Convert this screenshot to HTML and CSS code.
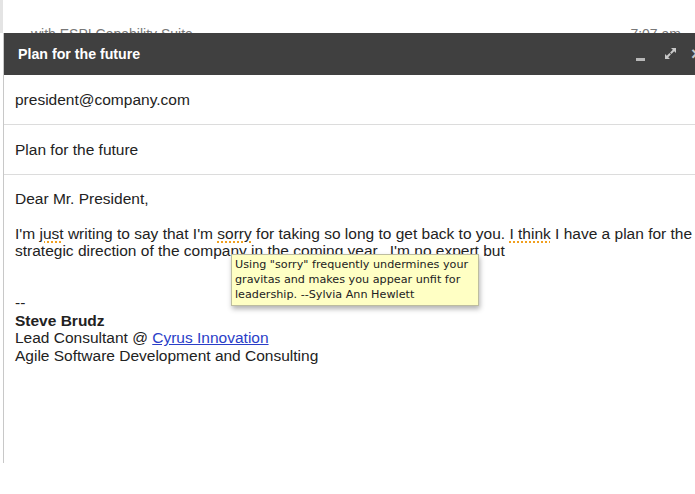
FILE: index.html
```html
<!DOCTYPE html>
<html lang="en">
<head>
    <meta charset="UTF-8">
    <title>Plan for the future</title>
    <link rel="stylesheet" href="styles.css">
</head>
<body>
    <div class="behind">
        <span class="behind-subject">with ESPI Capability Suite</span>
        <span class="behind-time">7:07 am</span>
    </div>
    <div class="compose">
        <div class="compose-head">
            <div class="compose-title">Plan for the future</div>
            <div class="compose-tools">
                <span class="tool-min"></span>
                <svg class="tool-expand" width="13" height="13" viewBox="0 0 13 13">
                    <path d="M7 1h5v5l-1.8-1.8-2.7 2.7-1.4-1.4 2.7-2.7z M6 12h-5v-5l1.8 1.8 2.7-2.7 1.4 1.4-2.7 2.7z" fill="#c8c8c8"/>
                </svg>
                <span class="tool-close">×</span>
            </div>
        </div>
        <div class="field">president@company.com</div>
        <div class="field">Plan for the future</div>
        <div class="body">
            <div>Dear Mr. President,</div>
            <br>
            <div>I'm <span class="flag">just</span> writing to say that I'm <span class="flag">sorry</span> for taking so long to get back to you. <span class="flag">I think</span> I have a plan for the strategic direction of the company in the coming year.&nbsp; I'm no <span class="flag">expert</span> but</div>
            <br>
            <br>
            <div>--</div>
            <div class="sig-name">Steve Brudz</div>
            <div>Lead Consultant @ <a href="#">Cyrus Innovation</a></div>
            <div>Agile Software Development and Consulting</div>
            <div class="tip">Using "sorry" frequently undermines your gravitas and makes you appear unfit for leadership. --Sylvia Ann Hewlett</div>
        </div>
    </div>
</body>
</html>
```

FILE: styles.css
```css
body {
    margin: 0;
    padding: 0;
    background: #fff;
    font-family: "Liberation Sans", Arial, sans-serif;
    color: #222;
    overflow: hidden;
}
.behind {
    height: 33px;
    overflow: hidden;
    display: flex;
    justify-content: space-between;
    box-sizing: border-box;
    padding: 26px 14px 0 28px;
    color: #777;
    font-size: 14px;
    line-height: 17px;
    border-left: 3px solid #e4e4e4;
}
.compose {
    margin-left: 3px;
    width: 720px;
    height: 430px;
    border-left: 1px solid #c8c8c8;
    background: #fff;
}
.compose-head {
    height: 42px;
    background: #404040;
    display: flex;
    align-items: center;
    justify-content: space-between;
    padding: 0 0 0 14px;
}
.compose-title {
    color: #fff;
    font-weight: bold;
    font-size: 14.2px;
}
.compose-tools {
    display: flex;
    align-items: center;
    width: 92px;
    margin-right: -4px;
}
.tool-min {
    width: 9px;
    height: 3px;
    background: #b8b8b8;
    margin-top: 10px;
}
.tool-expand {
    margin-left: 19px;
    margin-top: -2px;
}
.tool-close {
    margin-left: 14px;
    color: #c8c8c8;
    font-size: 18px;
    font-weight: bold;
}
.field {
    height: 49px;
    line-height: 50px;
    border-bottom: 1px solid #dcdcdc;
    padding-left: 11px;
    font-size: 15.5px;
}
.body {
    position: relative;
    padding: 15px 11px 0 11px;
    width: 685px;
    font-size: 15.5px;
    line-height: 17.4px;
}
.flag {
    text-decoration: underline dotted #f0a020;
    text-decoration-thickness: 1.5px;
    text-underline-offset: 3px;
}
.sig-name {
    font-weight: bold;
}
.body a {
    color: #2a3ec8;
}
.tip {
    position: absolute;
    left: 227px;
    top: 79px;
    width: 240px;
    padding: 2px 3px 3px 3px;
    background: #ffffc4;
    border: 1px solid #bdbda0;
    box-shadow: 1px 3px 5px rgba(0,0,0,0.3);
    font-family: "DejaVu Sans", Verdana, sans-serif;
    font-size: 11.2px;
    line-height: 15px;
    color: #222;
}
```
